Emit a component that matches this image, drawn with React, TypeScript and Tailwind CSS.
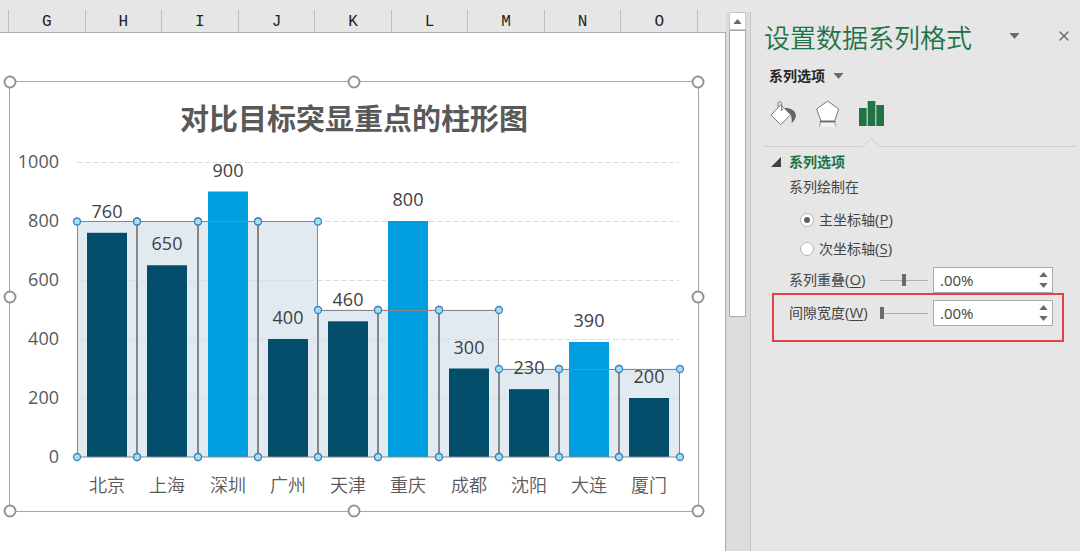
import React, { useState } from 'react';
import { X } from 'lucide-react';

const COLUMNS = ['G', 'H', 'I', 'J', 'K', 'L', 'M', 'N', 'O'];

const CITIES = [
  { name: '北京', value: 760, target: 800 },
  { name: '上海', value: 650, target: 800 },
  { name: '深圳', value: 900, target: 800 },
  { name: '广州', value: 400, target: 800 },
  { name: '天津', value: 460, target: 500 },
  { name: '重庆', value: 800, target: 500 },
  { name: '成都', value: 300, target: 500 },
  { name: '沈阳', value: 230, target: 300 },
  { name: '大连', value: 390, target: 300 },
  { name: '厦门', value: 200, target: 300 },
];

const TICKS = [0, 200, 400, 600, 800, 1000];

// plot geometry, in viewBox units
const LEFT = 67;
const PITCH = 60.25;
const BASE = 318;
const BAR_W = 40;

const yOf = (v: number) => BASE - v * 0.295;
const xOf = (i: number) => Math.round(LEFT + i * PITCH);

const HANDLES = [
  'left-0 top-0',
  'left-1/2 top-0',
  'left-full top-0',
  'left-0 top-1/2',
  'left-full top-1/2',
  'left-0 top-full',
  'left-1/2 top-full',
  'left-full top-full',
];

function ColumnChart() {
  return (
    <svg viewBox="0 0 688 372" className="block w-full h-auto" role="img" aria-label="对比目标突显重点的柱形图">
      {TICKS.map(t => (
        <text key={t} x={49} y={yOf(t) + 6} textAnchor="end" fontSize={18} fill="#595959">{t}</text>
      ))}

      {/* Target areas */}
      {CITIES.map((c, i) => (
        <rect key={c.name} x={xOf(i)} y={yOf(c.target)} width={xOf(i + 1) - xOf(i)} height={BASE - yOf(c.target)} fill="#e1eaf0" />
      ))}

      {/* Gridlines, showing faintly through the target areas */}
      {TICKS.slice(1).map(t => (
        <line key={t} x1={LEFT} x2={669} y1={Math.floor(yOf(t)) + 0.5} y2={Math.floor(yOf(t)) + 0.5} stroke="#d9dcde" strokeDasharray="5 3" />
      ))}

      {/* Actual values */}
      {CITIES.map((c, i) => (
        <rect
          key={c.name}
          x={xOf(i) + 10}
          y={yOf(c.value)}
          width={BAR_W}
          height={BASE - yOf(c.value)}
          fill={c.value > c.target ? '#009ddf' : '#034f6b'}
        />
      ))}

      {/* Selected series outline */}
      {CITIES.map((c, i) => (
        <rect
          key={c.name}
          x={xOf(i) + 0.5}
          y={Math.round(yOf(c.target)) + 0.5}
          width={xOf(i + 1) - xOf(i) - 1}
          height={BASE - Math.round(yOf(c.target)) - 0.5}
          fill="none"
          stroke="#84888c"
        />
      ))}
      {CITIES.map((c, i) => (
        <g key={c.name} fill="#a5dcf8" stroke="#3f83b4" strokeWidth={1.3}>
          <circle cx={xOf(i)} cy={yOf(c.target) + 0.5} r={3.5} />
          <circle cx={xOf(i + 1)} cy={yOf(c.target) + 0.5} r={3.5} />
          <circle cx={xOf(i)} cy={BASE} r={3.5} />
          <circle cx={xOf(i + 1)} cy={BASE} r={3.5} />
        </g>
      ))}

      {CITIES.map((c, i) => (
        <g key={c.name} textAnchor="middle" fontSize={18}>
          <text x={xOf(i) + 30} y={yOf(c.value) - 15} fill="#404040">{c.value}</text>
          <text x={xOf(i) + 30} y={353} fill="#595959" fontWeight={350}>{c.name}</text>
        </g>
      ))}
    </svg>
  );
}

function Caret({ className }: { className: string }) {
  return (
    <svg viewBox="0 0 10 6" className={className} fill="currentColor" aria-hidden="true">
      <path d="M0 0h10L5 6z" />
    </svg>
  );
}

function FillIcon() {
  return (
    <svg viewBox="0 0 81 81" className="size-[27px]" fill="none" aria-hidden="true">
      <path d="M44 24c12-1 26 4 30 12l4 10c-1 9-6 18-13 24 1-10 0-20-4-27z" fill="#666" />
      <path d="M32 15 62 44 32 74 3 45z" fill="#fff" stroke="#777" strokeWidth="3" />
      <path d="M24 22V11c0-8 11-8 11 0v18" stroke="#777" strokeWidth="3" />
      <circle cx="35" cy="29" r="3" fill="#777" />
    </svg>
  );
}

function EffectsIcon() {
  return (
    <svg viewBox="0 0 81 81" className="size-[27px]" fill="none" aria-hidden="true">
      <path d="M20 68h42l5 12H15z" fill="#f3f3f3" />
      <path d="m20 68-4 12M62 68l4 12" stroke="#999" strokeWidth="3" />
      <path d="M41 3 74 27 62 63H21L8 27z" fill="#fff" stroke="#777" strokeWidth="3" />
      <path d="M17 65h48" stroke="#666" strokeWidth="4" />
    </svg>
  );
}

function SeriesIcon() {
  return (
    <svg viewBox="0 0 81 81" className="size-[27px]" fill="#217346" aria-hidden="true">
      <path d="M3 24h23v54H3zM29 3h23v75H29zM55 15h23v63H55z" />
    </svg>
  );
}

const RADIO =
  'appearance-none grid place-content-center size-[14px] rounded-full border border-[#b4b4b4] bg-white before:size-[6px] before:rounded-full checked:before:bg-[#5f5f5f]';

const RANGE =
  'appearance-none w-12 h-4 bg-transparent [&::-webkit-slider-runnable-track]:h-px [&::-webkit-slider-runnable-track]:bg-[#b0b0b0] [&::-webkit-slider-thumb]:appearance-none [&::-webkit-slider-thumb]:w-1 [&::-webkit-slider-thumb]:h-3 [&::-webkit-slider-thumb]:-mt-[6px] [&::-webkit-slider-thumb]:bg-[#6a6a6a]';

function Hotkey({ k }: { k: string }) {
  return (
    <span className="text-[15px] leading-4">(<u className="underline-offset-2">{k}</u>)</span>
  );
}

type PercentRowProps = { id: string; label: string; hotkey: string; min: number; max: number };

function PercentRow({ id, label, hotkey, min, max }: PercentRowProps) {
  const [value, setValue] = useState(0);
  const text = value === 0 ? '.00%' : `${value}.00%`;
  const step = (d: number) => setValue(v => Math.min(max, Math.max(min, v + d)));

  return (
    <div className="flex items-center h-[26px]">
      <label htmlFor={id} className="w-[91px] h-5 shrink-0 whitespace-nowrap">
        {label}<Hotkey k={hotkey} />
      </label>
      <input type="range" aria-label={label} min={min} max={max} value={value} onChange={e => setValue(Number(e.target.value))} className={RANGE} />
      <div className="flex flex-1 min-w-0 h-full ml-[5px] bg-white border border-[#ababab]">
        <input
          id={id}
          type="text"
          value={text}
          onChange={e => setValue(parseInt(e.target.value, 10) || 0)}
          className="flex-1 min-w-0 px-[6px] text-[15px] outline-none"
        />
        <div className="flex flex-col justify-between w-[18px] py-1 text-[#6a6a6a]">
          <button type="button" aria-label="增加" onClick={() => step(1)} className="flex justify-center">
            <Caret className="w-[9px] h-[5px] rotate-180" />
          </button>
          <button type="button" aria-label="减少" onClick={() => step(-1)} className="flex justify-center">
            <Caret className="w-[9px] h-[5px]" />
          </button>
        </div>
      </div>
    </div>
  );
}

export default function App() {
  const [axis, setAxis] = useState('primary');

  return (
    <div className="flex min-h-screen bg-[#e6e6e6] text-[#444] text-sm leading-5 font-['Open_Sans','Noto_Sans_CJK_SC',sans-serif]">

      {/* Worksheet */}
      <main className="flex-1 min-w-0 flex flex-col">
        <div className="pt-[10px] pl-2 pr-7 border-b border-[#ababab]">
          <div className="grid grid-cols-9 h-[22px] border-l border-[#bdbdbd]">
            {COLUMNS.map(c => (
              <div key={c} className="flex items-center justify-center border-r border-[#bdbdbd] text-[#222] text-base font-['Liberation_Mono',monospace]">
                {c}
              </div>
            ))}
          </div>
        </div>

        <div className="flex-1 bg-white border-r border-[#ababab] pt-12 pl-[9px] pr-[26px] pb-10">
          <section className="relative border border-[#a6a6a6] pt-[17px]">
            <h1 className="text-center text-[29px] leading-10 font-bold text-[#595959]">对比目标突显重点的柱形图</h1>
            <ColumnChart />
            {HANDLES.map(pos => (
              <span key={pos} className={`absolute size-[13px] -translate-1/2 rounded-full border-2 border-[#949494] bg-white ${pos}`} />
            ))}
          </section>
        </div>
      </main>

      {/* Vertical scrollbar */}
      <div className="flex flex-col w-6 shrink-0 pt-3">
        <div className="flex-1 flex flex-col pl-[3px] pr-1 bg-[#dcdcdc]">
          <button type="button" aria-label="向上滚动" className="flex items-center justify-center h-[18px] bg-white border border-[#c6c6c6] text-[#6a6a6a]">
            <Caret className="w-[9px] h-[5px] rotate-180" />
          </button>
          <div className="h-[287px] bg-white border border-[#ababab]" />
        </div>
      </div>

      {/* Format pane */}
      <aside className="w-[330px] shrink-0 flex flex-col pt-3">
        <div className="flex-1 border-l border-[#c6c6c6] pt-[6px]">
          <div className="flex items-center h-10 pl-[13px] pr-2">
            <h2 className="flex-1 text-[26px] font-[350] text-[#217346]">设置数据系列格式</h2>
            <button type="button" aria-label="任务窗格选项" className="mr-9 -mt-1 text-[#6a6a6a]">
              <Caret className="w-[11px] h-[6px]" />
            </button>
            <button type="button" aria-label="关闭" className="-mt-1 text-[#6a6a6a]">
              <X className="size-4" />
            </button>
          </div>

          <button type="button" className="flex items-center gap-2 h-5 mt-2 ml-[18px] font-bold text-[#262626]">
            系列选项
            <Caret className="w-[11px] h-[6px] text-[#6a6a6a]" />
          </button>

          <div className="flex gap-[17px] mt-[14px] ml-[19px]">
            <button type="button" aria-label="填充与线条"><FillIcon /></button>
            <button type="button" aria-label="效果"><EffectsIcon /></button>
            <button type="button" aria-label="系列选项"><SeriesIcon /></button>
          </div>

          {/* Divider with a notch under the active tab */}
          <div className="flex mt-[10px] ml-[13px] mr-1">
            <div className="w-[99px] border-b border-[#cfcfcf]" />
            <svg viewBox="0 0 16 10" className="w-4 h-[10px]" fill="none" stroke="#cfcfcf" aria-hidden="true">
              <path d="M0 9.5 8 .7l8 8.8" />
            </svg>
            <div className="flex-1 border-b border-[#cfcfcf]" />
          </div>

          <div className="pl-[38px] pr-[27px]">
            <button type="button" className="flex items-center gap-2 h-5 mt-[5px] -ml-[18px] font-bold text-[#217346]">
              <svg viewBox="0 0 10 10" className="size-[10px]" fill="#404040" aria-hidden="true">
                <path d="M10 0v10H0z" />
              </svg>
              系列选项
            </button>

            <fieldset className="mt-[5px]">
              <legend>系列绘制在</legend>
              <div className="flex flex-col gap-[9px] pt-[13px] pl-[11px]">
                <label className="flex items-center gap-[5px] h-5">
                  <input type="radio" name="axis" checked={axis === 'primary'} onChange={() => setAxis('primary')} className={RADIO} />
                  <span>主坐标轴<Hotkey k="P" /></span>
                </label>
                <label className="flex items-center gap-[5px] h-5">
                  <input type="radio" name="axis" checked={axis === 'secondary'} onChange={() => setAxis('secondary')} className={RADIO} />
                  <span>次坐标轴<Hotkey k="S" /></span>
                </label>
              </div>
            </fieldset>

            <div className="flex flex-col gap-[7px] mt-2">
              <PercentRow id="overlap" label="系列重叠" hotkey="O" min={-100} max={100} />
              <div className="relative">
                <PercentRow id="gap" label="间隙宽度" hotkey="W" min={0} max={500} />
                <div className="absolute -top-[7px] -bottom-4 -left-[17px] -right-[11px] border-2 border-[#e04343] pointer-events-none" />
              </div>
            </div>
          </div>
        </div>
      </aside>
    </div>
  );
}
